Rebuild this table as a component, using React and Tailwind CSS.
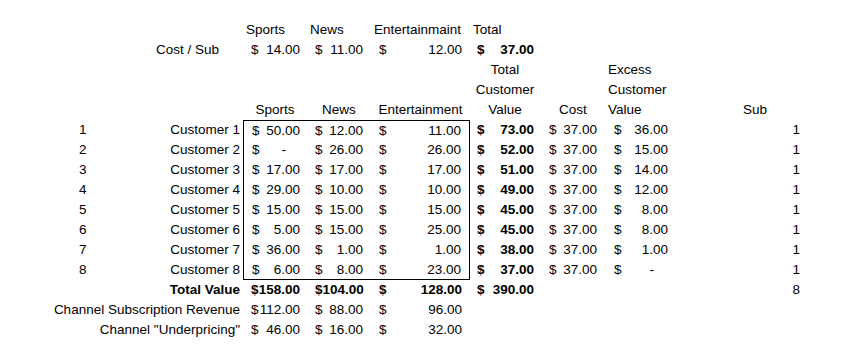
import React from "react";

const W = {
  A: "w-[154px]",
  B: "w-[89px]",
  C: "w-[64px]",
  D: "w-[64px]",
  E: "w-[99px]",
  F: "w-[70px]",
  G: "w-[66px]",
  H: "w-[69px]",
  I: "w-[30px]",
  J: "w-[100px]",
};

const PAD = {
  C: "pl-[8px] pr-[7px]",
  D: "pl-[8px] pr-[8px]",
  E: "pl-[8px] pr-[8px]",
  F: "pl-[7px] pr-[6px]",
  G: "pl-[9px] pr-[9px]",
  H: "pl-[8px] pr-[7px]",
};

function Money({ col, v, bold, extra = "" }) {
  return (
    <div
      className={`${W[col]} ${PAD[col]} ${extra} h-full flex items-center justify-between whitespace-nowrap ${
        bold ? "font-bold" : ""
      }`}
    >
      <span>$</span>
      {v === "-" ? <span className="pr-[14px]">-</span> : <span>{v}</span>}
    </div>
  );
}

function Text({ col, children, align = "left", extra = "", bold }) {
  const j =
    align === "left" ? "justify-start" : align === "right" ? "justify-end" : "justify-center";
  return (
    <div
      className={`${W[col]} ${extra} h-full flex items-center ${j} whitespace-nowrap ${
        bold ? "font-bold" : ""
      }`}
    >
      {children}
    </div>
  );
}

function Empty({ col, extra = "" }) {
  return <div className={`${W[col]} ${extra} h-full shrink-0`} />;
}

function Row({ children }) {
  return <div className="flex h-[20px] [&>*]:shrink-0">{children}</div>;
}

const customers = [
  ["50.00", "12.00", "11.00", "73.00", "36.00"],
  ["-", "26.00", "26.00", "52.00", "15.00"],
  ["17.00", "17.00", "17.00", "51.00", "14.00"],
  ["29.00", "10.00", "10.00", "49.00", "12.00"],
  ["15.00", "15.00", "15.00", "45.00", "8.00"],
  ["5.00", "15.00", "25.00", "45.00", "8.00"],
  ["36.00", "1.00", "1.00", "38.00", "1.00"],
  ["6.00", "8.00", "23.00", "37.00", "-"],
];

export default function App() {
  return (
    <div
      className="w-[864px] h-[355px] bg-white text-black pt-[20px] text-[13.5px] leading-none overflow-hidden"
      style={{ fontFamily: '"Liberation Sans", Arial, sans-serif' }}
    >
      {/* Row 1 */}
      <Row>
        <Empty col="A" />
        <Empty col="B" />
        <Text col="C" extra="pl-[3px]">Sports</Text>
        <Text col="D" extra="pl-[3px]">News</Text>
        <Text col="E" extra="pl-[3px]">Entertainmaint</Text>
        <Text col="F" extra="pl-[3px]">Total</Text>
      </Row>
      {/* Row 2 */}
      <Row>
        <Empty col="A" />
        <Text col="B" extra="pl-[2px]">Cost / Sub</Text>
        <Money col="C" v="14.00" />
        <Money col="D" v="11.00" />
        <Money col="E" v="12.00" />
        <Money col="F" v="37.00" bold />
      </Row>
      {/* Row 3 */}
      <Row>
        <Empty col="A" />
        <Empty col="B" />
        <Empty col="C" />
        <Empty col="D" />
        <Empty col="E" />
        <Text col="F" align="center">Total</Text>
        <Empty col="G" />
        <Text col="H" extra="pl-[2px]">Excess</Text>
      </Row>
      {/* Row 4 */}
      <Row>
        <Empty col="A" />
        <Empty col="B" />
        <Empty col="C" />
        <Empty col="D" />
        <Empty col="E" />
        <Text col="F" align="center">Customer</Text>
        <Empty col="G" />
        <Text col="H" extra="pl-[2px]">Customer</Text>
      </Row>
      {/* Row 5 */}
      <Row>
        <Empty col="A" />
        <Empty col="B" />
        <Text col="C" align="center">Sports</Text>
        <Text col="D" align="center">News</Text>
        <Text col="E" align="center">Entertainment</Text>
        <Text col="F" align="center">Value</Text>
        <Text col="G" align="center">Cost</Text>
        <Text col="H" extra="pl-[2px]">Value</Text>
        <Empty col="I" />
        <Text col="J" align="center">Sub</Text>
      </Row>
      {/* Customers */}
      {customers.map((c, i) => {
        const first = i === 0;
        const last = i === customers.length - 1;
        const tb = `${first ? "border-t border-black" : ""} ${last ? "border-b border-black" : ""}`;
        return (
          <Row key={i}>
            <Text col="A" extra="pl-[79px]">{i + 1}</Text>
            <Text col="B" align="right" extra="pr-[3px]">Customer {i + 1}</Text>
            <Money col="C" v={c[0]} extra={`border-l border-black ${tb}`} />
            <Money col="D" v={c[1]} extra={tb} />
            <Money col="E" v={c[2]} extra={`border-r border-black ${tb}`} />
            <Money col="F" v={c[3]} bold />
            <Money col="G" v="37.00" />
            <Money col="H" v={c[4]} />
            <Empty col="I" />
            <Text col="J" align="right" extra="pr-[5px]">1</Text>
          </Row>
        );
      })}
      {/* Total Value */}
      <Row>
        <Empty col="A" />
        <Text col="B" align="right" extra="pr-[3px]" bold>Total Value</Text>
        <Money col="C" v="158.00" bold />
        <Money col="D" v="104.00" bold />
        <Money col="E" v="128.00" bold />
        <Money col="F" v="390.00" bold />
        <Empty col="G" />
        <Empty col="H" />
        <Empty col="I" />
        <Text col="J" align="right" extra="pr-[5px]">8</Text>
      </Row>
      <Row>
        <Empty col="A" />
        <Text col="B" align="right" extra="pr-[3px]">Channel Subscription Revenue</Text>
        <Money col="C" v="112.00" />
        <Money col="D" v="88.00" />
        <Money col="E" v="96.00" />
      </Row>
      <Row>
        <Empty col="A" />
        <Text col="B" align="right" extra="pr-[3px]">Channel "Underpricing"</Text>
        <Money col="C" v="46.00" />
        <Money col="D" v="16.00" />
        <Money col="E" v="32.00" />
      </Row>
    </div>
  );
}
